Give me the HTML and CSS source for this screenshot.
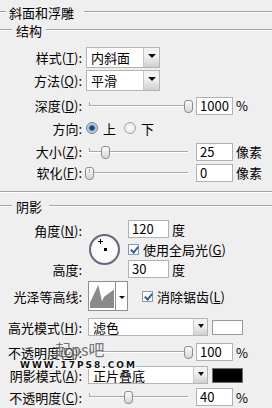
FILE: index.html
```html
<!DOCTYPE html>
<html lang="zh-CN">
<head>
  <meta charset="UTF-8" />
  <title>斜面和浮雕</title>
  <link rel="stylesheet" href="styles.css">
</head>
<body>

<div class="panel">
  <div class="legend title">斜面和浮雕</div>
  <div class="legend group">结构</div>

  <div class="row r-style">
    <span class="lbl">样式(<u>T</u>):</span>
    <div class="select small"><span class="val">内斜面</span><span class="drop"></span></div>
  </div>
  <div class="row r-method">
    <span class="lbl">方法(<u>Q</u>):</span>
    <div class="select small"><span class="val">平滑</span><span class="drop"></span></div>
  </div>
  <div class="row r-depth">
    <span class="lbl">深度(<u>D</u>):</span>
    <div class="slider"><span class="thumb" style="left: 100%"></span></div>
    <div class="num">1000</div><span class="unit">%</span>
  </div>
  <div class="row r-dir">
    <span class="lbl">方向:</span>
    <span class="radio on"></span><span class="opt">上</span>
    <span class="radio"></span><span class="opt">下</span>
  </div>
  <div class="row r-size">
    <span class="lbl">大小(<u>Z</u>):</span>
    <div class="slider"><span class="thumb" style="left: 16%"></span></div>
    <div class="num">25</div><span class="unit">像素</span>
  </div>
  <div class="row r-soft">
    <span class="lbl">软化(<u>F</u>):</span>
    <div class="slider"><span class="thumb" style="left: 0%"></span></div>
    <div class="num">0</div><span class="unit">像素</span>
  </div>

  <div class="groupend"></div>
  <div class="legend group shade">阴影</div>

  <div class="angle">
    <span class="lbl a-lbl">角度(<u>N</u>):</span>
    <div class="dial">
      <span class="cross"></span>
      <span class="dot"></span>
    </div>
    <div class="a-in"><div class="num">120</div><span class="unit">度</span></div>
    <div class="a-chk"><span class="check"></span><span class="opt">使用全局光(<u>G</u>)</span></div>
    <span class="lbl h-lbl">高度:</span>
    <div class="h-in"><div class="num">30</div><span class="unit">度</span></div>
  </div>

  <div class="row r-contour">
    <span class="lbl">光泽等高线:</span>
    <div class="contour">
      <svg class="curve" width="26" height="26" viewBox="0 0 26 26">
        <polygon points="0,26 0,20 9,1 12,14 13,19 15,14 26,6 26,26" fill="#8a8a8a"/>
      </svg>
      <span class="drop"></span>
    </div>
    <span class="check"></span><span class="opt">消除锯齿(<u>L</u>)</span>
  </div>

  <div class="row r-mode">
    <span class="lbl">高光模式(<u>H</u>):</span>
    <div class="select wide"><span class="val">滤色</span><span class="drop"></span></div>
    <span class="swatch white"></span>
  </div>
  <div class="row r-op1">
    <span class="lbl">不透明度(<u>O</u>):</span>
    <div class="slider"><span class="thumb" style="left: 100%"></span></div>
    <div class="num">100</div><span class="unit">%</span>
  </div>
  <div class="row r-mode2">
    <span class="lbl">阴影模式(<u>A</u>):</span>
    <div class="select wide"><span class="val">正片叠底</span><span class="drop"></span></div>
    <span class="swatch black"></span>
  </div>
  <div class="row r-op2">
    <span class="lbl">不透明度(<u>C</u>):</span>
    <div class="slider"><span class="thumb" style="left: 39%"></span></div>
    <div class="num">40</div><span class="unit">%</span>
  </div>

  <div class="mark">
    <span class="mark-cn">起ps吧</span>
    <span class="mark-url">WWW.17PS8.COM</span>
  </div>
</div>

</body>
</html>
```

FILE: styles.css
```css
body { margin: 0; background: #efefef; font-family: "Noto Sans CJK SC", "Noto Sans", sans-serif; font-size: 13px; color: #000; overflow: hidden; }
u { text-decoration: underline; text-underline-offset: 1px; }
.panel { position: relative; width: 272px; height: 408px; overflow: hidden; }

/* etched section lines */
.legend { display: flex; align-items: center; line-height: 1; white-space: nowrap; }
.legend::before, .legend::after { content: ""; height: 0; border-top: 1px solid #a3a3a3; border-bottom: 1px solid #fff; }
.legend::after { flex: 1; }
.title { height: 24px; }
.title::before { width: 6px; margin-right: 3px; }
.title::after { margin-left: 10px; }
.group { height: 12px; }
.group::before { width: 12px; margin-right: 4px; }
.group::after { margin-left: 4px; }
.shade { height: 14px; margin-top: 6px; }
.shade::after { margin-left: 7px; }
.groupend { margin-top: 9px; border-top: 1px solid #a3a3a3; border-bottom: 1px solid #fff; }

.row { display: flex; align-items: center; height: 19px; }
.lbl { width: 82px; flex: none; text-align: right; white-space: nowrap; }

.r-style { height: 21px; margin-top: 11px; }
.r-method { height: 21px; margin-top: 2px; }
.r-depth { margin-top: 5px; }
.r-dir { height: 18px; margin-top: 4px; }
.r-size { margin-top: 5px; }
.r-soft { margin-top: 2px; }

/* select boxes */
.select { display: flex; background: #fff; border: 1px solid #b4b4b4; box-sizing: border-box; }
.select .val { flex: 1; padding-left: 4px; line-height: 1; align-self: center; }
.select.small { width: 74px; height: 21px; margin-left: 4px; }
.select.wide { width: 120px; height: 18px; margin-left: 6px; }
.drop { position: relative; flex: none; width: 15px; border-left: 1px solid #c8c8c8; background: linear-gradient(#f2f2f2 40%, #cfcfcf); }
.select.wide .drop { width: 13px; }
.drop::after { content: ""; position: absolute; left: 50%; top: 6px; margin-left: -4px; border-left: 4px solid transparent; border-right: 4px solid transparent; border-top: 4px solid #111; }
.select.wide .drop::after { top: 5px; margin-left: -3px; border-width: 3px 3px 0; border-top-width: 4px; }

/* sliders */
.slider { position: relative; width: 99px; height: 14px; margin-left: 7px; flex: none; }
.slider::before { content: ""; position: absolute; left: 0; right: 0; top: 6px; border-top: 1px solid #a8a8a8; border-bottom: 1px solid #fff; }
.slider::after { content: ""; position: absolute; left: 0; top: 3px; height: 4px; border-left: 1px solid #a8a8a8; }
.thumb { position: absolute; top: 1px; width: 7px; height: 11px; margin-left: -4px; background: linear-gradient(#fafafa, #d6d6d6); border: 1px solid #8c8c8c; border-radius: 3px 3px 4px 4px; }

.num { flex: none; width: 37px; height: 18px; box-sizing: border-box; background: #fff; border: 1px solid #b1b1b1; padding-left: 3px; line-height: 16px; margin-left: 8px; }
.unit { margin-left: 3px; }

/* radio + checkbox */
.radio { flex: none; width: 12px; height: 12px; box-sizing: border-box; border-radius: 50%; border: 1px solid #a7a7a7; background: radial-gradient(circle, #fff, #dcdcdc); margin-left: 4px; position: relative; }
.radio.on { border-color: #6d7f99; background: radial-gradient(circle, #1c3f6e 0 2px, #8fb0d4 3px, #e4edf6 6px); }
.radio + .opt { margin-left: 5px; }
.opt + .radio { margin-left: 8px; }
.check { flex: none; position: relative; width: 11px; height: 11px; box-sizing: border-box; background: #fff; border: 1px solid #8a9aae; }
.check::after { content: ""; position: absolute; left: 3px; top: 0px; width: 3px; height: 6px; border: solid #3a5c96; border-width: 0 2px 2px 0; transform: rotate(40deg); }
.check + .opt { margin-left: 4px; }

/* angle block */
.angle { display: grid; grid-template-columns: 82px 44px 1fr; grid-template-rows: 20px 20px 20px; margin-top: 6px; align-items: center; }
.a-lbl { grid-row: 1; grid-column: 1; padding-top: 3px; }
.h-lbl { grid-row: 3; grid-column: 1; }
.dial { grid-row: 1 / 4; grid-column: 2; justify-self: center; position: relative; width: 31px; height: 31px; box-sizing: border-box; border: 2px solid #626a7a; border-radius: 50%; background: radial-gradient(circle, #fbfbfb 55%, #e2e4e8); }
.dot { position: absolute; left: 14px; top: 13px; width: 3px; height: 3px; background: #000; margin: -1px 0 0 -1px; }
.cross { position: absolute; left: 7px; top: 3px; width: 5px; height: 5px; background: linear-gradient(#000, #000) center / 1px 5px no-repeat, linear-gradient(#000, #000) center / 5px 1px no-repeat; }
.a-in, .h-in, .a-chk { display: flex; align-items: center; }
.a-in { grid-row: 1; grid-column: 3; }
.a-chk { grid-row: 2; grid-column: 3; padding-left: 2px; }
.h-in { grid-row: 3; grid-column: 3; }
.angle .num { margin-left: 2px; width: 41px; }

/* contour picker */
.r-contour { height: 30px; margin-top: 2px; }
.contour { flex: none; display: flex; width: 40px; height: 30px; box-sizing: border-box; margin-left: 6px; background: #fff; border: 1px solid #8e8e8e; }
.curve { margin: 1px; }
.contour .drop { width: 11px; border-left: 1px solid #8e8e8e; background: #fff; }
.contour .drop::after { top: 14px; margin-left: -3px; border-width: 3px 3px 0; border-top-width: 3px; }
.r-contour .check { margin-left: 14px; }

.r-mode { height: 18px; margin-top: 7px; }
.r-op1 { height: 18px; margin-top: 7px; }
.r-mode2 { height: 18px; margin-top: 5px; }
.r-op2 { height: 18px; margin-top: 4px; }
.swatch { flex: none; width: 31px; height: 15px; box-sizing: border-box; margin-left: 4px; border: 1px solid #9a9a9a; }
.swatch.white { background: #fff; }
.swatch.black { background: #000; border-color: #707070; }

/* watermark over the dialog */
.mark { position: absolute; left: 20px; top: 340px; width: 110px; height: 32px; }
.mark-cn { position: absolute; left: 35px; top: 0; font-size: 16px; line-height: 19px; color: #555; opacity: .8; text-shadow: 0 0 2px #fff; }
.mark-url { position: absolute; left: 0; top: 20px; font-family: "DejaVu Sans", sans-serif; font-weight: bold; font-size: 9px; line-height: 10px; letter-spacing: 2px; color: #111; text-shadow: 1px 0 0 #fff, -1px 0 0 #fff, 0 1px 0 #fff, 0 -1px 0 #fff; }
```
